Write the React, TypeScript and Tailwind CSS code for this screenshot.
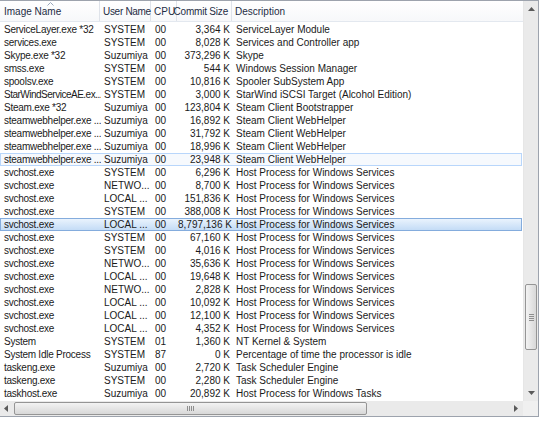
const ROWS: [string, string, string, string, string][] = [
  ["ServiceLayer.exe *32", "SYSTEM", "00", "3,364 K", "ServiceLayer Module"],
  ["services.exe", "SYSTEM", "00", "8,028 K", "Services and Controller app"],
  ["Skype.exe *32", "Suzumiya", "00", "373,296 K", "Skype"],
  ["smss.exe", "SYSTEM", "00", "544 K", "Windows Session Manager"],
  ["spoolsv.exe", "SYSTEM", "00", "10,816 K", "Spooler SubSystem App"],
  ["StarWindServiceAE.ex...", "SYSTEM", "00", "3,000 K", "StarWind iSCSI Target (Alcohol Edition)"],
  ["Steam.exe *32", "Suzumiya", "00", "123,804 K", "Steam Client Bootstrapper"],
  ["steamwebhelper.exe ...", "Suzumiya", "00", "16,892 K", "Steam Client WebHelper"],
  ["steamwebhelper.exe ...", "Suzumiya", "00", "31,792 K", "Steam Client WebHelper"],
  ["steamwebhelper.exe ...", "Suzumiya", "00", "18,996 K", "Steam Client WebHelper"],
  ["steamwebhelper.exe ...", "Suzumiya", "00", "23,948 K", "Steam Client WebHelper"],
  ["svchost.exe", "SYSTEM", "00", "6,296 K", "Host Process for Windows Services"],
  ["svchost.exe", "NETWO...", "00", "8,700 K", "Host Process for Windows Services"],
  ["svchost.exe", "LOCAL ...", "00", "151,836 K", "Host Process for Windows Services"],
  ["svchost.exe", "SYSTEM", "00", "388,008 K", "Host Process for Windows Services"],
  ["svchost.exe", "LOCAL ...", "00", "8,797,136 K", "Host Process for Windows Services"],
  ["svchost.exe", "SYSTEM", "00", "67,160 K", "Host Process for Windows Services"],
  ["svchost.exe", "SYSTEM", "00", "4,016 K", "Host Process for Windows Services"],
  ["svchost.exe", "NETWO...", "00", "35,636 K", "Host Process for Windows Services"],
  ["svchost.exe", "LOCAL ...", "00", "19,648 K", "Host Process for Windows Services"],
  ["svchost.exe", "NETWO...", "00", "2,828 K", "Host Process for Windows Services"],
  ["svchost.exe", "LOCAL ...", "00", "10,092 K", "Host Process for Windows Services"],
  ["svchost.exe", "LOCAL ...", "00", "12,100 K", "Host Process for Windows Services"],
  ["svchost.exe", "LOCAL ...", "00", "4,352 K", "Host Process for Windows Services"],
  ["System", "SYSTEM", "01", "1,360 K", "NT Kernel & System"],
  ["System Idle Process", "SYSTEM", "87", "0 K", "Percentage of time the processor is idle"],
  ["taskeng.exe", "Suzumiya", "00", "2,720 K", "Task Scheduler Engine"],
  ["taskeng.exe", "SYSTEM", "00", "2,280 K", "Task Scheduler Engine"],
  ["taskhost.exe", "Suzumiya", "00", "20,892 K", "Host Process for Windows Tasks"],
];

const HOVER = 10;
const SELECTED = 15;

const COLS = "grid grid-cols-[100px_51px_26px_55px_1fr]";

function Row({ cells, index }: { cells: string[]; index: number }) {
  let tone = "border-transparent";
  if (index === SELECTED) tone = "border-[#84acdd] bg-gradient-to-b from-[#eaf3fd] to-[#c4dcf6]";
  if (index === HOVER) tone = "border-[#b8d6fb] bg-[#f6f9fd]";
  // long truncated names need a tighter fit
  const nameFit = cells[0].length > 22 ? "tracking-[-0.5px]" : "tracking-[-0.25px]";
  return (
    <div className={`${COLS} h-[13px] items-center border leading-[11px] whitespace-nowrap ${tone}`}>
      <span className={`pl-[3px] overflow-hidden ${nameFit}`}>{cells[0]}</span>
      <span className="pl-[3px] overflow-hidden">{cells[1]}</span>
      <span className="pl-[3px]">{cells[2]}</span>
      <span className="pr-[3px] text-right">{cells[3]}</span>
      <span className="pl-[3px] overflow-hidden">{cells[4]}</span>
    </div>
  );
}

export default function App() {
  return (
    <div
      className="w-[540px] h-[425px] bg-white text-[10px] text-[#1a1a1a] overflow-hidden"
      style={{ fontFamily: "'Liberation Sans', Arial, sans-serif" }}
    >
      <div className="w-[539px] border-t border-r border-b border-[#9da3ad] flex flex-col">
        <div className="flex h-[400px]">
          {/* list */}
          <div className="w-[524px] flex flex-col">
            {/* header */}
            <div className={`${COLS} h-[21px] items-center border-b border-[#e3e8ef] bg-gradient-to-b from-white to-[#f7f8fa] text-[#1e2d44] whitespace-nowrap`}>
              <span className="pl-[4px] h-full flex items-center border-r border-[#dfe3ea] relative">
                Image Name
                <svg width="7" height="4" viewBox="0 0 7 4" className="absolute left-[47px] top-[1px]">
                  <path d="M0.5 3.5 L3.5 0.5 L6.5 3.5" fill="none" stroke="#98a6ba" strokeWidth="1" />
                </svg>
              </span>
              <span className="pl-[3px] h-full flex items-center border-r border-[#dfe3ea] tracking-[-0.3px]">User Name</span>
              <span className="pl-[3px] h-full flex items-center border-r border-[#dfe3ea]">CPU</span>
              <span className="pr-[3px] h-full flex items-center justify-end border-r border-[#dfe3ea] tracking-[-0.2px]">Commit Size</span>
              <span className="pl-[3px] h-full flex items-center">Description</span>
            </div>
            <div className="pt-[1px] pr-[1px]">
              {ROWS.map((r, i) => (
                <Row key={i} cells={r} index={i} />
              ))}
            </div>
          </div>
          {/* vertical scrollbar */}
          <div className="w-[15px] bg-[#eaeaea] border-l border-[#e6e6e6] flex flex-col items-center relative">
            <svg width="7" height="4" viewBox="0 0 7 4" className="mt-[6px]">
              <path d="M0 4 L3.5 0 L7 4 Z" fill="#5a5a5a" />
            </svg>
            <div className="absolute left-[1px] top-[283px] w-[12px] h-[66px] rounded-[2px] border border-[#959595] bg-gradient-to-r from-[#f3f3f3] to-[#d8d8d8] flex items-center justify-center">
              <div className="flex flex-col gap-[1px]">
                <div className="w-[5px] h-[1px] bg-[#8e8e8e]" />
                <div className="w-[5px] h-[1px] bg-[#8e8e8e]" />
                <div className="w-[5px] h-[1px] bg-[#8e8e8e]" />
                <div className="w-[5px] h-[1px] bg-[#8e8e8e]" />
              </div>
            </div>
            <svg width="7" height="4" viewBox="0 0 7 4" className="mt-auto mb-[6px]">
              <path d="M0 0 L3.5 4 L7 0 Z" fill="#5a5a5a" />
            </svg>
          </div>
        </div>
        {/* horizontal scrollbar */}
        <div className="flex h-[15px]">
          <div className="w-[524px] bg-[#eaeaea] flex items-center relative">
            <svg width="4" height="7" viewBox="0 0 4 7" className="ml-[4px]">
              <path d="M4 0 L0 3.5 L4 7 Z" fill="#5a5a5a" />
            </svg>
            <div className="absolute left-[14px] top-[1px] w-[353px] h-[13px] rounded-[2px] border border-[#959595] bg-gradient-to-b from-[#f3f3f3] to-[#d8d8d8] flex items-center justify-center">
              <div className="flex gap-[1px]">
                <div className="w-[1px] h-[5px] bg-[#8e8e8e]" />
                <div className="w-[1px] h-[5px] bg-[#8e8e8e]" />
                <div className="w-[1px] h-[5px] bg-[#8e8e8e]" />
                <div className="w-[1px] h-[5px] bg-[#8e8e8e]" />
              </div>
            </div>
            <svg width="4" height="7" viewBox="0 0 4 7" className="ml-auto mr-[5px]">
              <path d="M0 0 L4 3.5 L0 7 Z" fill="#5a5a5a" />
            </svg>
          </div>
          <div className="w-[15px] bg-[#f0f0f0]" />
        </div>
      </div>
    </div>
  );
}
